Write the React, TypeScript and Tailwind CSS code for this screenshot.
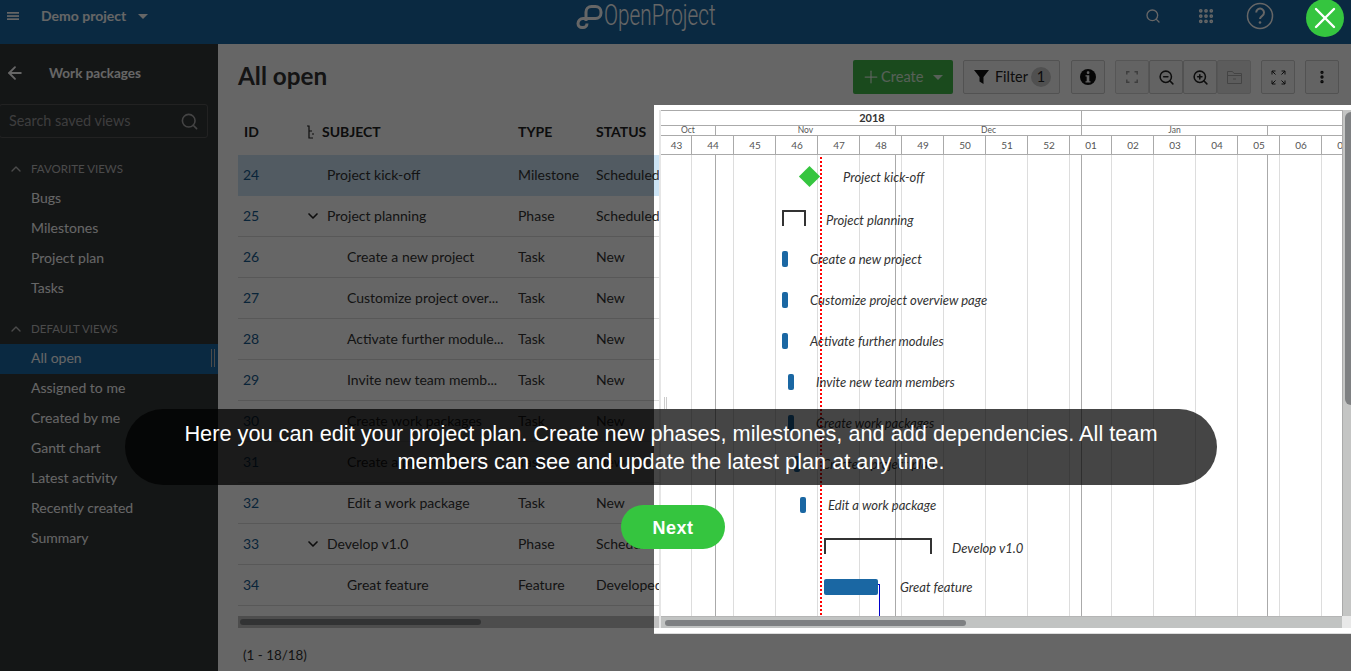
import React from "react";
import { ArrowLeft, ChevronDown, ChevronUp, Grip, Search, X, ZoomIn, ZoomOut, EllipsisVertical, Plus } from "lucide-react";

const FONT = "font-['Lato','Noto_Sans',sans-serif]";

const rows: [number, string, string, string, number, boolean][] = [
  [24, "Project kick-off", "Milestone", "Scheduled", 25, false],
  [25, "Project planning", "Phase", "Scheduled", 25, true],
  [26, "Create a new project", "Task", "New", 45, false],
  [27, "Customize project over...", "Task", "New", 45, false],
  [28, "Activate further module...", "Task", "New", 45, false],
  [29, "Invite new team memb...", "Task", "New", 45, false],
  [30, "Create work packages", "Task", "New", 45, false],
  [31, "Create a project plan", "Task", "New", 45, false],
  [32, "Edit a work package", "Task", "New", 45, false],
  [33, "Develop v1.0", "Phase", "Scheduled", 25, true],
  [34, "Great feature", "Feature", "Developed", 45, false],
];

function HierarchyIcon() {
  return (
    <svg width="9" height="14" viewBox="0 0 9 14" fill="none" stroke="#222" strokeWidth="1.2" className="absolute left-[68px] top-[13px]">
      <path d="M1 1h2v5h3M3 6v7h4M6 9h2" />
    </svg>
  );
}

function TablePane() {
  return (
    <div className={`w-[421px] ${FONT}`}>
      <div className="relative grid h-[43px] grid-cols-[64px_210px_78px_69px] items-center pb-[4px] text-[14px] font-bold text-[#222]">
        <span className="pl-[6px]">ID</span>
        <span className="pl-[20px]">SUBJECT</span>
        <span className="pl-[6px]">TYPE</span>
        <span className="pl-[6px]">STATUS</span>
        <HierarchyIcon />
      </div>
      <div className="h-[461px] overflow-hidden">
        {rows.map(([id, subject, type, status, indent, parent], i) => (
          <div
            key={id}
            className={`grid h-[41px] grid-cols-[64px_210px_78px_69px] items-center border-b pb-[2px] text-[14px] text-[#333] ${i === 0 ? "border-transparent bg-[#cce4f5]" : "border-[#ddd]"}`}
          >
            <span className="pl-[5px] text-[#175a8e]">{id}</span>
            <span className="relative truncate" style={{ paddingLeft: indent }}>
              {parent && <ChevronDown size={16} strokeWidth={2.5} className="absolute left-[3px] top-[3px] text-[#222]" />}
              {subject}
            </span>
            <span className="pl-[6px]">{type}</span>
            <span className="overflow-hidden whitespace-nowrap pl-[6px]">{status}</span>
          </div>
        ))}
      </div>
      <div className="flex h-[12px] items-center bg-[#c1c1c1] pl-[2px]">
        <div className="h-[6px] w-[241px] rounded-full bg-[#7e8082]" />
      </div>
    </div>
  );
}

function TableEdge() {
  return (
    <div className={`mt-[45px] w-[5px] overflow-hidden ${FONT}`} aria-hidden="true">
      <div className="h-[461px] overflow-hidden">
        {rows.map(([id, , , status], i) => (
          <div
            key={id}
            className={`flex h-[41px] items-center border-b pb-[2px] text-[14px] text-[#333] ${i === 0 ? "border-transparent bg-[#cce4f5]" : "border-[#ddd]"}`}
          >
            {status.length > 3 && <span className="ml-[-58px] whitespace-nowrap">{status}</span>}
          </div>
        ))}
      </div>
      <div className="h-[12px] bg-[#c1c1c1]" />
    </div>
  );
}

function ToolButton({ children, active, dim }: { children: React.ReactNode; active?: boolean; dim?: boolean }) {
  return (
    <div className={`flex h-[34px] w-[34px] items-center justify-center rounded-[2px] border ${dim ? "border-[#d8d8d8]" : "border-[#ccc]"} ${active ? "bg-[#e6e6e6]" : "bg-[#f8f8f8]"}`}>
      {children}
    </div>
  );
}

function Sidebar() {
  const fav = ["Bugs", "Milestones", "Project plan", "Tasks"];
  const def = ["All open", "Assigned to me", "Created by me", "Gantt chart", "Latest activity", "Recently created", "Summary"];
  return (
    <aside className="w-[218px] shrink-0 bg-[#333739] text-[14px] text-white">
      <div className="flex h-[60px] items-center pl-[5px] pb-[2px]">
        <ArrowLeft size={20} strokeWidth={2.2} />
        <span className="ml-[24px] text-[13.5px] font-bold">Work packages</span>
      </div>
      <div className="ml-[-1px] flex h-[34px] w-[209px] items-center justify-between rounded-[3px] border border-[#555] pl-[9px] pr-[8px]">
        <span className="text-[14.4px] text-[#999]">Search saved views</span>
        <Search size={19} className="text-[#aaa]" />
      </div>
      <div className="mt-[16px] flex h-[29px] items-center pl-[8px] text-[11.5px] text-[#bbb]">
        <ChevronUp size={16} />
        <span className="ml-[7px]">FAVORITE VIEWS</span>
      </div>
      {fav.map((f) => (
        <div key={f} className="flex h-[30px] items-center pb-[2px] pl-[31px]">{f}</div>
      ))}
      <div className="mt-[11px] flex h-[30px] items-center pl-[8px] text-[11.5px] text-[#bbb]">
        <ChevronUp size={16} />
        <span className="ml-[7px]">DEFAULT VIEWS</span>
      </div>
      {def.map((f, i) => (
        <div key={f} className={`relative flex h-[30px] items-center pb-[4px] pl-[31px] ${i === 0 ? "bg-[#1a67a3]" : ""}`}>
          {f}
          {i === 0 && <div className="absolute left-[211px] top-[5px] h-[18px] w-[4px] border-x border-[#bbb]" />}
        </div>
      ))}
    </aside>
  );
}

const months: [string, number][] = [["Oct", 55], ["Nov", 180], ["Dec", 186], ["Jan", 186], ["", 74]];
const weeks = ["43", "44", "45", "46", "47", "48", "49", "50", "51", "52", "01", "02", "03", "04", "05", "06", "07"];
const weekLines = [691, 733, 775, 817, 859, 901, 943, 985, 1027, 1069, 1111, 1153, 1195, 1237, 1279, 1321];
const monthLines = [715, 895, 1081, 1267];

const bars: [number, number, number, number][] = [
  [782, 251, 6, 16], [782, 292, 6, 16], [782, 333, 6, 16], [788, 374, 6, 16],
  [788, 415, 6, 16], [794, 456, 6, 16], [800, 497, 6, 16], [824, 579, 54, 16],
];
const labels: [string, number, number][] = [
  ["Project kick-off", 843, 178], ["Project planning", 826, 221], ["Create a new project", 810, 260],
  ["Customize project overview page", 810, 301], ["Activate further modules", 810, 342], ["Invite new team members", 816, 383],
  ["Create work packages", 816, 424], ["Create a project plan", 822, 465], ["Edit a work package", 828, 506],
  ["Develop v1.0", 952, 549], ["Great feature", 900, 588],
];
const brackets: [number, number, number][] = [[782, 210, 24], [824, 538, 108]];
const CX = 661;
const CY = 155;

function Gantt() {
  return (
    <div className={`relative flex h-[518px] flex-1 flex-col overflow-hidden ${FONT}`}>
      <div className="flex min-h-0 flex-1">
        <div className="flex w-[681px] shrink-0 flex-col">
          <div className="flex h-[15px] border-t border-[#aaa] text-[#333]">
            <div className="flex w-[421px] items-center justify-center border-r border-[#aaa] pl-[2px] text-[11px] font-bold">2018</div>
          </div>
          <div className="flex h-[10px] border-t border-[#aaa] text-[8.5px] leading-[9px] text-[#555]">
            {months.map(([m, w]) => (
              <div key={m + w} style={{ width: w }} className="border-r border-[#aaa] text-center last:border-r-0">{m}</div>
            ))}
          </div>
          <div className="flex h-[20px] overflow-hidden border-y border-[#aaa] text-[10px] leading-[18px] text-[#555]">
            {weeks.map((w, i) => (
              <div key={w} style={{ width: i === 0 ? 31 : 42 }} className="shrink-0 border-r border-[#aaa] pl-[1px] text-center">{w}</div>
            ))}
          </div>
          <div className="relative flex-1 overflow-hidden">
            {weekLines.map((x) => (
              <div key={x} className="absolute bottom-0 top-0 w-px bg-[#ddd]" style={{ left: x - CX }} />
            ))}
            {monthLines.map((x) => (
              <div key={x} className="absolute bottom-0 top-0 w-px bg-[#aaa]" style={{ left: x - CX }} />
            ))}
            <div className="absolute left-[159px] top-[2px] bottom-0 w-[2px] bg-[repeating-linear-gradient(to_bottom,#f00_0,#f00_2px,transparent_2px,transparent_4px)]" />
            <div className="absolute left-[141px] top-[14px] h-[15px] w-[15px] rotate-45 bg-[#35c53f]" />
            {bars.map(([x, y, w, h]) => (
              <div key={`${x}-${y}`} className="absolute rounded-[2px] bg-[#1a67a3]" style={{ left: x - CX, top: y - CY, width: w, height: h }} />
            ))}
            {brackets.map(([x, y, w]) => (
              <div key={y} className="absolute h-[16px] rounded-t-[1px] border-x-2 border-t-2 border-[#333]" style={{ left: x - CX, top: y - CY, width: w }} />
            ))}
            <div className="absolute left-[217px] top-[429px] h-[32px] w-[2px] rounded-tr-[1px] border-r border-t border-[#0000cc]" />
            {labels.map(([t, x, y]) => (
              <span key={t} className="absolute -translate-y-1/2 whitespace-nowrap text-[13.05px] italic text-[#333]" style={{ left: x - CX, top: y - CY }}>{t}</span>
            ))}
          </div>
        </div>
        <div className="relative w-[9px] shrink-0 border-l border-[#aaa] bg-[#c4c5c4]">
          <div className="absolute left-[2px] top-[2px] h-[293px] w-[6px] rounded-l-full bg-[#7e8082]" />
        </div>
      </div>
      <div className="flex h-[12px] shrink-0">
        <div className="flex w-[681px] items-center border-t border-[#b5b5b5] bg-[#c1c3c2] pl-[4px]">
          <div className="h-[6px] w-[301px] rounded-full bg-[#7e8082]" />
        </div>
        <div className="w-[9px] bg-[#e8e8e8]" />
      </div>
    </div>
  );
}

export default function App() {
  return (
    <div className={`relative h-[671px] w-[1351px] overflow-hidden bg-white ${FONT}`}>
      <header className="flex h-[44px] items-start bg-[#1a67a3] text-white">
        <svg width="12" height="8" viewBox="0 0 12 8" fill="white" className="ml-[7px] mt-[12px] shrink-0">
          <rect width="12" height="1.700" />
          <rect y="3.200" width="12" height="1.700" />
          <rect y="6.300" width="12" height="1.700" />
        </svg>
        <span className="ml-[22px] mt-[6px] text-[14px] font-bold leading-[20px]">Demo project</span>
        <div className="ml-[12px] mt-[14px] h-0 w-0 border-x-[5px] border-t-[5px] border-x-transparent border-t-white" />
        <div className="ml-[428px] mt-[5px] flex items-start">
          <svg width="27" height="24" viewBox="0 0 27 24" fill="none" stroke="white" strokeWidth="3">
            <path d="M10 16V7a5.500 5.500 0 0 1 5.500-5.500h4A5.500 5.500 0 0 1 25 7v1a5.500 5.500 0 0 1-5.500 5.500H7a5 5 0 0 0-5 5a4 4 0 0 0 4 4h1a4 4 0 0 0 4-4" />
          </svg>
          <span className="ml-[1px] mt-[-4px] origin-left scale-x-[0.715] whitespace-nowrap font-['Roboto',sans-serif] text-[29px] font-light leading-[28px]">OpenProject</span>
        </div>
        <div className="ml-auto flex items-start">
          <Search size={16} strokeWidth={2} className="mt-[8px]" />
          <Grip size={18} strokeWidth={3} className="ml-[36px] mt-[7px]" />
          <svg width="28" height="28" viewBox="0 0 28 28" fill="none" stroke="white" strokeWidth="1.5" className="ml-[31px] mt-[2px]">
            <circle cx="14" cy="14" r="12.500" />
            <path d="M10.200 10.500a3.900 3.900 0 1 1 6 3.300c-1.500 1-2.200 1.800-2.200 3.200" strokeWidth="2" />
            <circle cx="14" cy="20.500" r="1.300" fill="white" stroke="none" />
          </svg>
          <div className="w-[77px]" />
        </div>
      </header>
      <div className="flex h-[627px]">
        <Sidebar />
        <main className="flex min-w-0 flex-1 flex-col pl-[20px] pr-[12px] pt-[16px]">
          <div className="flex h-[34px] items-center">
            <h1 className="pb-[3px] text-[24.3px] font-bold leading-[32px] text-[#333]">All open</h1>
            <div className="ml-auto flex items-center">
              <div className="flex h-[34px] w-[100px] items-center rounded-[2px] bg-[#41b84a] pl-[8px] text-[14.6px] text-white/80">
                <Plus size={20} strokeWidth={1.5} />
                <span>Create</span>
                <div className="ml-[10px] h-0 w-0 border-x-[5px] border-t-[5px] border-x-transparent border-t-white/80" />
              </div>
              <div className="ml-[10px] flex h-[34px] w-[97px] items-center rounded-[2px] border border-[#ccc] bg-[#f8f8f8] pl-[10px] text-[14.4px] text-[#222]">
                <svg width="15" height="14" viewBox="0 0 15 14" fill="#111"><path d="M0 0h15L9.500 7v7l-4-2.500V7z" /></svg>
                <span className="ml-[6px]">Filter</span>
                <span className="ml-[3px] flex h-[20px] w-[20px] items-center justify-center rounded-full bg-[#c8c8c8]">1</span>
              </div>
              <div className="ml-[11px]">
                <ToolButton>
                  <svg width="18" height="18" viewBox="0 0 18 18">
                    <circle cx="9" cy="9" r="8" fill="#111" />
                    <rect x="7.800" y="3.300" width="2.600" height="2.600" rx="1" fill="#f8f8f8" />
                    <path d="M6.500 7.200h3.800v6h1.200v1.300H6.500v-1.300h1.200V8.500H6.500z" fill="#f8f8f8" />
                  </svg>
                </ToolButton>
              </div>
              <div className="ml-[10px] flex">
                <ToolButton dim>
                  <svg width="12" height="12" viewBox="0 0 12 12" fill="none" stroke="#999" strokeWidth="1.500"><path d="M0.800 3.500V0.800h2.700M8.500 0.800h2.700v2.700M11.200 8.500v2.700H8.500M3.500 11.200H0.800V8.500" /></svg>
                </ToolButton>
                <ToolButton>
                  <ZoomOut size={17} strokeWidth={2.2} className="text-[#222]" />
                </ToolButton>
                <ToolButton>
                  <ZoomIn size={17} strokeWidth={2.2} className="text-[#222]" />
                </ToolButton>
                <ToolButton active dim>
                  <svg width="15" height="13" viewBox="0 0 15 13" fill="none" stroke="#aaa" strokeWidth="1"><path d="M0.500 2V0.500h5L7 2.500h7.500v10H0.500zM0.500 4.500h14M6 8h3" /></svg>
                </ToolButton>
              </div>
              <div className="ml-[10px]">
                <ToolButton>
                  <svg width="15" height="15" viewBox="0 0 15 15" fill="none" stroke="#222" strokeWidth="1"><path d="M1 4.500V1h3.500M1 1l3.500 3.500M10.500 1H14v3.500M14 1l-3.500 3.500M14 10.500V14h-3.500M14 14l-3.500-3.500M4.500 14H1v-3.500M1 14l3.500-3.500" /></svg>
                </ToolButton>
              </div>
              <div className="ml-[10px]">
                <ToolButton>
                  <EllipsisVertical size={16} strokeWidth={3} className="text-[#111]" />
                </ToolButton>
              </div>
            </div>
          </div>
          <div className="mt-[18px]">
            <TablePane />
          </div>
          <div className="flex flex-1 items-center pl-[5px] pt-[12px] text-[13.4px] text-[#333]">(1 - 18/18)</div>
        </main>
      </div>

      <div className="absolute inset-0 bg-black/60" />

      <section className="absolute left-[654px] top-[105px] flex h-[529px] w-[697px] border-b border-[#ddd] bg-white pt-[5px]">
        <TableEdge />
        <div className="relative h-[518px] w-[2px] shrink-0 bg-[#e6e6e6]">
          <div className="absolute left-[5px] top-[287px] h-[12px] w-[3px] border-x border-[#ccc]" />
        </div>
        <Gantt />
      </section>

      <div className="absolute left-[125px] top-[409px] flex h-[76px] w-[1092px] items-center justify-center rounded-full bg-black/[0.73] px-[50px] pt-[2px] text-center font-['Liberation_Sans',Arial,sans-serif] text-[21.72px] leading-[28px] text-white">
        Here you can edit your project plan. Create new phases, milestones, and add dependencies. All team members can see and update the latest plan at any time.
      </div>

      <div className="absolute left-[621px] top-[505px] flex h-[44px] w-[104px] items-center justify-center rounded-full bg-[#35c53f] pt-[2px] font-['Liberation_Sans',Arial,sans-serif] text-[18px] font-bold tracking-[0.5px] text-white">
        Next
      </div>

      <div className="absolute left-[1306px] top-[-1px] flex h-[38px] w-[38px] items-center justify-center rounded-full bg-[#35c53f] text-white">
        <X size={36} strokeWidth={1.6} />
      </div>
    </div>
  );
}
